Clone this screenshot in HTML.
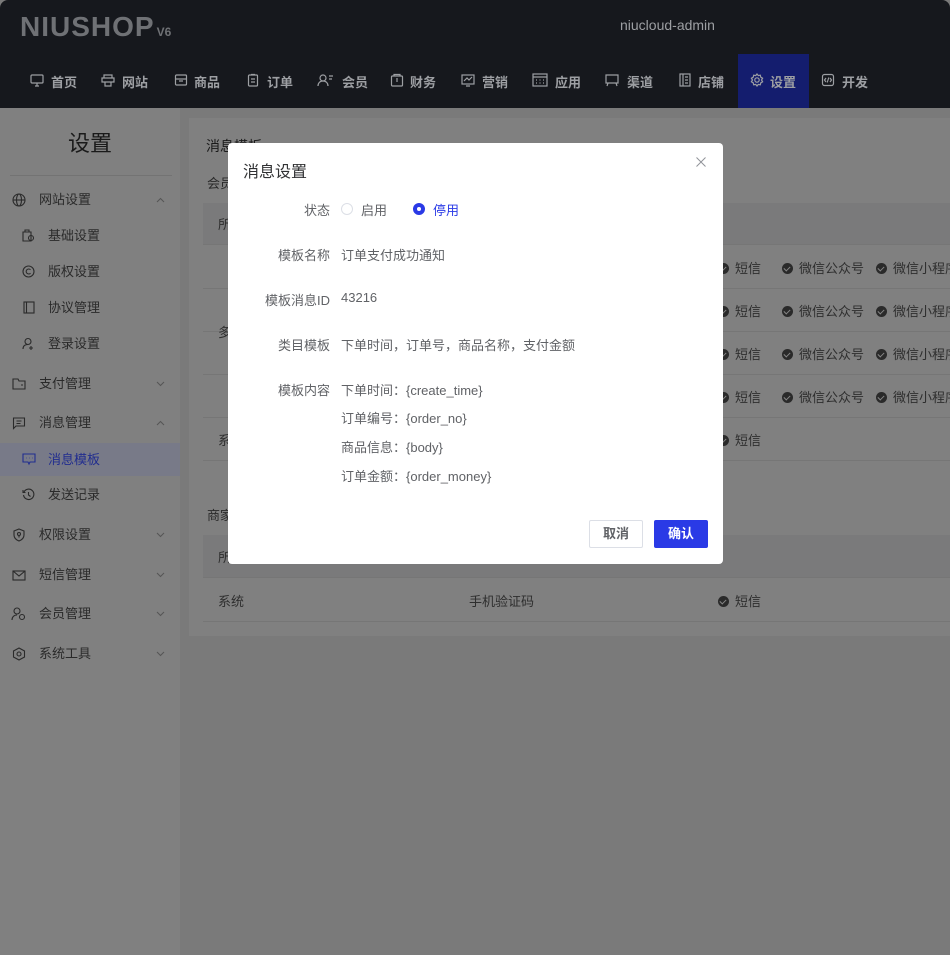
<!DOCTYPE html>
<html><head><meta charset="utf-8"><style>
*{margin:0;padding:0;box-sizing:border-box}
body{width:950px;height:955px;overflow:hidden;background:#7a7a7a;font-family:"Liberation Sans","Noto Sans CJK SC",sans-serif;font-size:13px;color:#2e2e2e;position:relative}
.abs{position:absolute;white-space:nowrap}
.top{position:absolute;left:0;top:0;width:950px;height:108px;background:#16181d;border-radius:8px 8px 0 0}
.logo{left:20px;top:10px;font-size:28px;font-weight:bold;color:#6f7175;letter-spacing:1px;line-height:34px}
.logo small{font-size:12px;letter-spacing:0;margin-left:2px}
.nav{top:72px;color:#9d9fa3;font-size:13px;font-weight:bold}
.nav svg{position:absolute;left:0;top:1px}
.side{position:absolute;left:0;top:108px;width:180px;height:847px;background:#808080}
.si{position:absolute;left:0;width:180px;height:36px;line-height:36px;color:#2a2a2a;font-size:13px}
.si svg{position:absolute;top:11px}
.si svg.ch{left:156px;top:15px}
.card{position:absolute;left:189px;top:118px;width:761px;height:518px;background:#808080}
.th{position:absolute;left:203px;width:747px;background:#7a7a7b}
.ln{position:absolute;left:203px;width:747px;height:1px;background:#767676}
.ck{display:inline-block;width:11px;height:11px;border-radius:50%;background:#2a2a2a;vertical-align:-1px;margin-right:6px;position:relative}
.ck:after{content:"";position:absolute;left:3px;top:2px;width:3px;height:5px;border:solid #888;border-width:0 1.5px 1.5px 0;transform:rotate(45deg)}
.dlg{position:absolute;left:228px;top:143px;width:495px;height:421px;background:#fff;border-radius:4px}
.lb{position:absolute;right:393px;color:#606266;font-size:13px}
.vl{position:absolute;left:113px;color:#606266;font-size:13px;white-space:nowrap}
.s1{display:inline-block;width:21px}.s2{display:inline-block;width:12px}
</style></head><body>
<div class="top"></div>
<div class="abs logo">NIUSHOP<small>V6</small></div>
<div class="abs" style="left:620px;top:17px;color:#9d9fa3;font-size:14px">niucloud-admin</div>
<div class="abs" style="left:738px;top:54px;width:71px;height:54px;background:#141d6e"></div>

<div class="abs nav" style="left:30px"><svg width="14" height="14" viewBox="0 0 14 14" fill="none" stroke="#9d9fa3" stroke-width="1.2"><rect x="1" y="2" width="12" height="8" rx="1"/><path d="M5 13h4M7 10v3"/></svg><span style="margin-left:21px">首页</span></div>
<div class="abs nav" style="left:101px"><svg width="14" height="14" viewBox="0 0 14 14" fill="none" stroke="#9d9fa3" stroke-width="1.2"><path d="M3 2h8v3H3zM1 5h12v4H1zM4 9v4h6V9"/></svg><span style="margin-left:21px">网站</span></div>
<div class="abs nav" style="left:174px"><svg width="14" height="14" viewBox="0 0 14 14" fill="none" stroke="#9d9fa3" stroke-width="1.2"><rect x="1.5" y="2" width="11" height="10" rx="1"/><path d="M1.5 6h11M5 8h4"/></svg><span style="margin-left:20px">商品</span></div>
<div class="abs nav" style="left:246px"><svg width="14" height="14" viewBox="0 0 14 14" fill="none" stroke="#9d9fa3" stroke-width="1.2"><rect x="2.5" y="2" width="9" height="11" rx="1"/><path d="M5 1.5h4M5 6h4M5 9h4"/></svg><span style="margin-left:21px">订单</span></div>
<div class="abs nav" style="left:317px"><svg width="18" height="14" viewBox="0 0 18 14" fill="none" stroke="#9d9fa3" stroke-width="1.2"><circle cx="6" cy="5" r="3"/><path d="M1 13c0-3 2-5 5-5s5 2 5 5M12 3h4M12 6h3"/></svg><span style="margin-left:25px">会员</span></div>
<div class="abs nav" style="left:390px"><svg width="14" height="14" viewBox="0 0 14 14" fill="none" stroke="#9d9fa3" stroke-width="1.2"><rect x="1.5" y="3" width="11" height="10" rx="1"/><path d="M4 3V1.5h6V3M7 5v4"/></svg><span style="margin-left:20px">财务</span></div>
<div class="abs nav" style="left:461px"><svg width="14" height="14" viewBox="0 0 14 14" fill="none" stroke="#9d9fa3" stroke-width="1.2"><rect x="1" y="2" width="12" height="9"/><path d="M3 8l3-3 2 2 3-3M5 13h4"/></svg><span style="margin-left:21px">营销</span></div>
<div class="abs nav" style="left:532px"><svg width="16" height="14" viewBox="0 0 16 14" fill="none" stroke="#9d9fa3" stroke-width="1.2"><rect x="1" y="1" width="14" height="12"/><path d="M1 4h14M4 7h1M7.5 7h1M11 7h1M4 10h1M7.5 10h1M11 10h1"/></svg><span style="margin-left:23px">应用</span></div>
<div class="abs nav" style="left:605px"><svg width="14" height="14" viewBox="0 0 14 14" fill="none" stroke="#9d9fa3" stroke-width="1.2"><path d="M1 2h12v8H1zM3 10l-1 3M11 10l1 3"/></svg><span style="margin-left:22px">渠道</span></div>
<div class="abs nav" style="left:678px"><svg width="14" height="14" viewBox="0 0 14 14" fill="none" stroke="#9d9fa3" stroke-width="1.2"><rect x="2" y="1" width="10" height="12"/><path d="M5 1v12M7 4h3M7 7h3M7 10h3"/></svg><span style="margin-left:20px">店铺</span></div>
<div class="abs nav" style="left:750px"><svg width="14" height="14" viewBox="0 0 14 14" fill="none" stroke="#9d9fa3" stroke-width="1.2"><circle cx="7" cy="7" r="2.2"/><path d="M7 1l1.3 1.6 2-.4.5 2 1.8 1L11.5 7l1.1 1.8-1.8 1-.5 2-2-.4L7 13l-1.3-1.6-2 .4-.5-2-1.8-1L2.5 7 1.4 5.2l1.8-1 .5-2 2 .4z"/></svg><span style="margin-left:20px">设置</span></div>
<div class="abs nav" style="left:821px"><svg width="14" height="14" viewBox="0 0 14 14" fill="none" stroke="#9d9fa3" stroke-width="1.2"><rect x="1.5" y="1.5" width="11" height="11" rx="2"/><path d="M5 5L3.5 7 5 9M9 5l1.5 2L9 9M7.8 4.5L6.2 9.5"/></svg><span style="margin-left:21px">开发</span></div>

<div class="side">
<div class="abs" style="left:0;width:180px;top:18px;text-align:center;font-size:22px;color:#1a1a1a">设置</div>
<div class="abs" style="left:10px;top:67px;width:162px;height:1px;background:#737373"></div>
</div>
<div class="si" style="top:182px"><svg style="left:12px" width="14" height="14" viewBox="0 0 14 14" fill="none" stroke="#2a2a2a" stroke-width="1.1"><circle cx="7" cy="7" r="6"/><ellipse cx="7" cy="7" rx="2.5" ry="6"/><path d="M1 7h12"/></svg><span style="margin-left:39px">网站设置</span><svg class="ch" width="9" height="6" viewBox="0 0 9 6" fill="none" stroke="#555" stroke-width="1"><path d="M1 5l3.5-3.5L8 5"/></svg></div>
<div class="si" style="top:218px"><svg style="left:22px" width="13" height="13" viewBox="0 0 13 13" fill="none" stroke="#2a2a2a" stroke-width="1.1"><path d="M1 3h8v9H1zM3 3V1h4v2"/><circle cx="9" cy="9" r="2.5"/></svg><span style="margin-left:48px">基础设置</span></div>
<div class="si" style="top:254px"><svg style="left:22px" width="13" height="13" viewBox="0 0 13 13" fill="none" stroke="#2a2a2a" stroke-width="1.1"><circle cx="6.5" cy="6.5" r="5.5"/><path d="M8.5 4.8A2.5 2.5 0 1 0 8.5 8.2"/></svg><span style="margin-left:48px">版权设置</span></div>
<div class="si" style="top:290px"><svg style="left:23px" width="12" height="13" viewBox="0 0 12 13" fill="none" stroke="#2a2a2a" stroke-width="1.1"><rect x="1" y="1" width="10" height="11"/><path d="M3.5 1v11"/></svg><span style="margin-left:48px">协议管理</span></div>
<div class="si" style="top:326px"><svg style="left:22px" width="13" height="13" viewBox="0 0 13 13" fill="none" stroke="#2a2a2a" stroke-width="1.1"><circle cx="6" cy="4.5" r="3"/><path d="M1 12c0-3 2-4.5 5-4.5M9 9v4M7 11h4"/></svg><span style="margin-left:48px">登录设置</span></div>
<div class="si" style="top:366px"><svg style="left:12px" width="14" height="14" viewBox="0 0 14 14" fill="none" stroke="#2a2a2a" stroke-width="1.1"><path d="M1 2h5l1 2h6v8H1zM9 8h2"/></svg><span style="margin-left:39px">支付管理</span><svg class="ch" width="9" height="6" viewBox="0 0 9 6" fill="none" stroke="#555" stroke-width="1"><path d="M1 1l3.5 3.5L8 1"/></svg></div>
<div class="si" style="top:405px"><svg style="left:12px" width="14" height="14" viewBox="0 0 14 14" fill="none" stroke="#2a2a2a" stroke-width="1.1"><path d="M1.5 2h11v8H4l-2.5 2.5zM4.5 5h5M4.5 7.5h4"/></svg><span style="margin-left:39px">消息管理</span><svg class="ch" width="9" height="6" viewBox="0 0 9 6" fill="none" stroke="#555" stroke-width="1"><path d="M1 5l3.5-3.5L8 5"/></svg></div>
<div class="si" style="top:443px;height:33px;line-height:33px;background:#787a88;color:#212d8f"><svg style="left:22px;top:10px" width="14" height="13" viewBox="0 0 14 13" fill="none" stroke="#212d8f" stroke-width="1.1"><path d="M1 1h12v8H8l-1 2-1-2H1zM4 5h.5M7 5h.5M10 5h.5"/></svg><span style="margin-left:48px">消息模板</span></div>
<div class="si" style="top:477px"><svg style="left:22px" width="13" height="13" viewBox="0 0 13 13" fill="none" stroke="#2a2a2a" stroke-width="1.1"><path d="M2 4A5.2 5.2 0 1 1 1.5 7M6.5 4v3l2 1.5M1 2v2.5h2.5"/></svg><span style="margin-left:48px">发送记录</span></div>
<div class="si" style="top:517px"><svg style="left:12px" width="14" height="14" viewBox="0 0 14 14" fill="none" stroke="#2a2a2a" stroke-width="1.1"><path d="M7 1l5 2v4c0 3-2.5 5-5 6-2.5-1-5-3-5-6V3z"/><circle cx="7" cy="6" r="1.5"/><path d="M7 7.5v2"/></svg><span style="margin-left:39px">权限设置</span><svg class="ch" width="9" height="6" viewBox="0 0 9 6" fill="none" stroke="#555" stroke-width="1"><path d="M1 1l3.5 3.5L8 1"/></svg></div>
<div class="si" style="top:557px"><svg style="left:12px" width="14" height="14" viewBox="0 0 14 14" fill="none" stroke="#2a2a2a" stroke-width="1.1"><rect x="1" y="3" width="12" height="9"/><path d="M1 3l6 5 6-5"/></svg><span style="margin-left:39px">短信管理</span><svg class="ch" width="9" height="6" viewBox="0 0 9 6" fill="none" stroke="#555" stroke-width="1"><path d="M1 1l3.5 3.5L8 1"/></svg></div>
<div class="si" style="top:596px"><svg style="left:11px" width="16" height="14" viewBox="0 0 16 14" fill="none" stroke="#2a2a2a" stroke-width="1.1"><circle cx="6" cy="4" r="3"/><path d="M1 13c0-3 2-5 5-5"/><circle cx="11" cy="10" r="2.5"/></svg><span style="margin-left:39px">会员管理</span><svg class="ch" width="9" height="6" viewBox="0 0 9 6" fill="none" stroke="#555" stroke-width="1"><path d="M1 1l3.5 3.5L8 1"/></svg></div>
<div class="si" style="top:636px"><svg style="left:12px" width="14" height="14" viewBox="0 0 14 14" fill="none" stroke="#2a2a2a" stroke-width="1.1"><path d="M7 1l5.5 3v6L7 13l-5.5-3V4z"/><circle cx="7" cy="7" r="2"/></svg><span style="margin-left:39px">系统工具</span><svg class="ch" width="9" height="6" viewBox="0 0 9 6" fill="none" stroke="#555" stroke-width="1"><path d="M1 1l3.5 3.5L8 1"/></svg></div>

<div class="card"></div>
<div class="abs" style="left:206px;top:136px;font-size:14px;color:#1a1a1a">消息模板</div>
<div class="abs" style="left:207px;top:173px;font-size:13px;color:#2a2a2a">会员消息</div>
<div class="th" style="top:203px;height:41px"></div>
<div class="abs" style="left:218px;top:214px">所属插件</div>
<div class="ln" style="top:244px"></div><div class="ln" style="top:288px"></div><div class="ln" style="top:331px"></div><div class="ln" style="top:374px"></div><div class="ln" style="top:417px"></div><div class="ln" style="top:460px"></div>
<div class="abs" style="left:218px;top:322px">多应用</div>
<div class="abs" style="left:218px;top:430px">系统</div>
<div class="abs" style="left:718px;top:258px"><span class="ck"></span>短信<span class="s1"></span><span class="ck"></span>微信公众号<span class="s2"></span><span class="ck"></span>微信小程序</div>
<div class="abs" style="left:718px;top:301px"><span class="ck"></span>短信<span class="s1"></span><span class="ck"></span>微信公众号<span class="s2"></span><span class="ck"></span>微信小程序</div>
<div class="abs" style="left:718px;top:344px"><span class="ck"></span>短信<span class="s1"></span><span class="ck"></span>微信公众号<span class="s2"></span><span class="ck"></span>微信小程序</div>
<div class="abs" style="left:718px;top:387px"><span class="ck"></span>短信<span class="s1"></span><span class="ck"></span>微信公众号<span class="s2"></span><span class="ck"></span>微信小程序</div>
<div class="abs" style="left:718px;top:430px"><span class="ck"></span>短信</div>
<div class="abs" style="left:207px;top:505px;color:#2a2a2a">商家消息</div>
<div class="th" style="top:535px;height:42px"></div>
<div class="abs" style="left:218px;top:547px">所属插件</div>
<div class="ln" style="top:577px"></div>
<div class="abs" style="left:218px;top:591px">系统</div>
<div class="abs" style="left:469px;top:591px">手机验证码</div>
<div class="abs" style="left:718px;top:591px"><span class="ck"></span>短信</div>
<div class="ln" style="top:621px"></div>

<div class="dlg">
<div class="abs" style="left:15px;top:15px;font-size:16px;color:#303133">消息设置</div>
<svg class="abs" style="left:468px;top:14px" width="10" height="10" viewBox="0 0 10 10" stroke="#909399" stroke-width="1"><path d="M0.5 0.5l9 9M9.5 0.5l-9 9"/></svg>
<div class="lb" style="top:57px">状态</div>
<div class="abs" style="left:113px;top:60px;width:12px;height:12px;border:1px solid #dcdfe6;border-radius:50%"></div>
<div class="vl" style="left:133px;top:57px">启用</div>
<div class="abs" style="left:185px;top:60px;width:12px;height:12px;background:#2a3ae6;border-radius:50%"><div style="position:absolute;left:4px;top:4px;width:4px;height:4px;background:#fff;border-radius:50%"></div></div>
<div class="vl" style="left:205px;top:57px;color:#2a3ae6">停用</div>
<div class="lb" style="top:102px">模板名称</div><div class="vl" style="top:102px">订单支付成功通知</div>
<div class="lb" style="top:147px">模板消息ID</div><div class="vl" style="top:147px">43216</div>
<div class="lb" style="top:192px">类目模板</div><div class="vl" style="top:192px">下单时间，订单号，商品名称，支付金额</div>
<div class="lb" style="top:237px">模板内容</div><div class="vl" style="top:237px">下单时间：{create_time}</div>
<div class="vl" style="top:265px">订单编号：{order_no}</div>
<div class="vl" style="top:294px">商品信息：{body}</div>
<div class="vl" style="top:323px">订单金额：{order_money}</div>
<div class="abs" style="left:361px;top:377px;width:54px;height:28px;border:1px solid #dcdfe6;border-radius:2px;text-align:center;line-height:26px;color:#606266;font-weight:bold">取消</div>
<div class="abs" style="left:426px;top:377px;width:54px;height:28px;background:#2a3ae6;border-radius:2px;text-align:center;line-height:28px;color:#fff;font-weight:bold">确认</div>
</div>
</body></html>
